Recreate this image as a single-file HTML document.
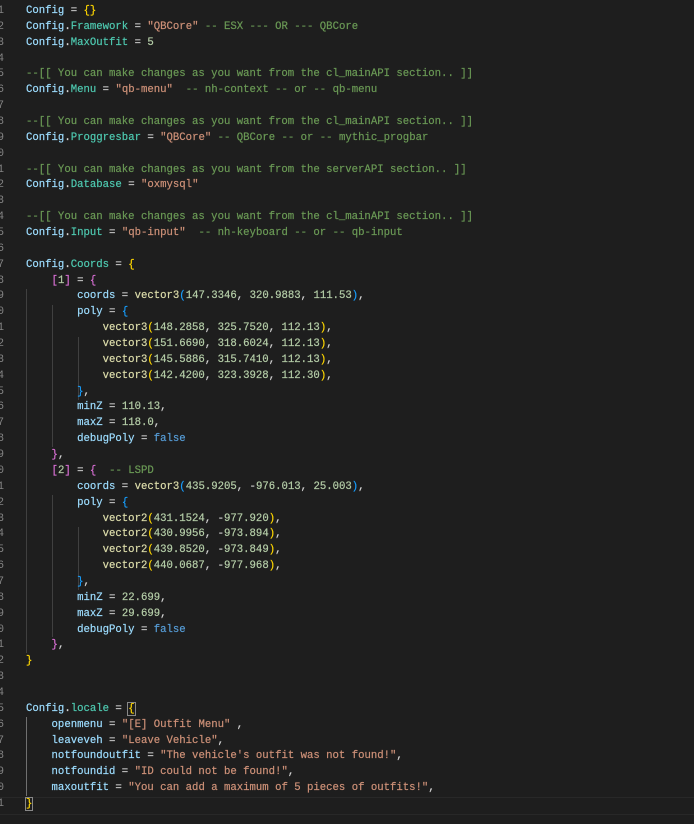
<!DOCTYPE html>
<html><head><meta charset="utf-8"><style>
html,body{margin:0;padding:0;background:#1e1e1e;width:694px;height:824px;overflow:hidden}
pre{margin:0;position:absolute;top:4px;left:26px;font-family:"Liberation Mono",monospace;font-size:10.65px;line-height:15.86px;color:#d4d4d4;white-space:pre;-webkit-text-stroke:0.2px currentColor}
.ln{position:absolute;top:4px;left:-16px;width:20px;text-align:right;font-family:"Liberation Mono",monospace;font-size:10.65px;line-height:15.86px;color:#858585;white-space:pre}
.v{color:#9cdcfe}.p{color:#4ec9b0}.s{color:#ce9178}.c{color:#6a9955}.n{color:#b5cea8}.f{color:#dcdcaa}.k{color:#569cd6}
.b1{color:#ffd700}.b2{color:#da70d6}.b3{color:#179fff}
.g{position:absolute;width:1px;background:#404040}
.hl{position:absolute;left:0;right:0;top:797px;height:16px;border-top:1px solid #282828;border-bottom:1px solid #282828}
.bx{outline:1px solid #888;}
</style></head><body>
<div class="hl"></div>
<div class="g" style="left:26px;top:289px;height:364px"></div>
<div class="g" style="left:52px;top:305px;height:142px"></div>
<div class="g" style="left:52px;top:495px;height:142px"></div>
<div class="g" style="left:78px;top:337px;height:63px"></div>
<div class="g" style="left:78px;top:527px;height:63px"></div>
<div class="g" style="left:26px;top:717px;height:79px;background:#707070"></div>
<div class="ln">1
2
3
4
5
6
7
8
9
0
1
2
3
4
5
6
7
8
9
0
1
2
3
4
5
6
7
8
9
0
1
2
3
4
5
6
7
8
9
0
1
2
3
4
5
6
7
8
9
0
1</div>
<pre><span class="v">Config</span> = <span class="b1">{}</span>
<span class="v">Config</span>.<span class="p">Framework</span> = <span class="s">"QBCore"</span> <span class="c">-- ESX --- OR --- QBCore</span>
<span class="v">Config</span>.<span class="p">MaxOutfit</span> = <span class="n">5</span>

<span class="c">--[[ You can make changes as you want from the cl_mainAPI section.. ]]</span>
<span class="v">Config</span>.<span class="p">Menu</span> = <span class="s">"qb-menu"</span>  <span class="c">-- nh-context -- or -- qb-menu</span>

<span class="c">--[[ You can make changes as you want from the cl_mainAPI section.. ]]</span>
<span class="v">Config</span>.<span class="p">Proggresbar</span> = <span class="s">"QBCore"</span> <span class="c">-- QBCore -- or -- mythic_progbar</span>

<span class="c">--[[ You can make changes as you want from the serverAPI section.. ]]</span>
<span class="v">Config</span>.<span class="p">Database</span> = <span class="s">"oxmysql"</span>

<span class="c">--[[ You can make changes as you want from the cl_mainAPI section.. ]]</span>
<span class="v">Config</span>.<span class="p">Input</span> = <span class="s">"qb-input"</span>  <span class="c">-- nh-keyboard -- or -- qb-input</span>

<span class="v">Config</span>.<span class="p">Coords</span> = <span class="b1">{</span>
    <span class="b2">[</span><span class="n">1</span><span class="b2">]</span> = <span class="b2">{</span>
        <span class="v">coords</span> = <span class="f">vector3</span><span class="b3">(</span><span class="n">147.3346</span>, <span class="n">320.9883</span>, <span class="n">111.53</span><span class="b3">)</span>,
        <span class="v">poly</span> = <span class="b3">{</span>
            <span class="f">vector3</span><span class="b1">(</span><span class="n">148.2858</span>, <span class="n">325.7520</span>, <span class="n">112.13</span><span class="b1">)</span>,
            <span class="f">vector3</span><span class="b1">(</span><span class="n">151.6690</span>, <span class="n">318.6024</span>, <span class="n">112.13</span><span class="b1">)</span>,
            <span class="f">vector3</span><span class="b1">(</span><span class="n">145.5886</span>, <span class="n">315.7410</span>, <span class="n">112.13</span><span class="b1">)</span>,
            <span class="f">vector3</span><span class="b1">(</span><span class="n">142.4200</span>, <span class="n">323.3928</span>, <span class="n">112.30</span><span class="b1">)</span>,
        <span class="b3">}</span>,
        <span class="v">minZ</span> = <span class="n">110.13</span>,
        <span class="v">maxZ</span> = <span class="n">118.0</span>,
        <span class="v">debugPoly</span> = <span class="k">false</span>
    <span class="b2">}</span>,
    <span class="b2">[</span><span class="n">2</span><span class="b2">]</span> = <span class="b2">{</span>  <span class="c">-- LSPD</span>
        <span class="v">coords</span> = <span class="f">vector3</span><span class="b3">(</span><span class="n">435.9205</span>, -<span class="n">976.013</span>, <span class="n">25.003</span><span class="b3">)</span>,
        <span class="v">poly</span> = <span class="b3">{</span>
            <span class="f">vector2</span><span class="b1">(</span><span class="n">431.1524</span>, -<span class="n">977.920</span><span class="b1">)</span>,
            <span class="f">vector2</span><span class="b1">(</span><span class="n">430.9956</span>, -<span class="n">973.894</span><span class="b1">)</span>,
            <span class="f">vector2</span><span class="b1">(</span><span class="n">439.8520</span>, -<span class="n">973.849</span><span class="b1">)</span>,
            <span class="f">vector2</span><span class="b1">(</span><span class="n">440.0687</span>, -<span class="n">977.968</span><span class="b1">)</span>,
        <span class="b3">}</span>,
        <span class="v">minZ</span> = <span class="n">22.699</span>,
        <span class="v">maxZ</span> = <span class="n">29.699</span>,
        <span class="v">debugPoly</span> = <span class="k">false</span>
    <span class="b2">}</span>,
<span class="b1">}</span>


<span class="v">Config</span>.<span class="p">locale</span> = <span class="b1 bx">{</span>
    <span class="v">openmenu</span> = <span class="s">"[E] Outfit Menu"</span> ,
    <span class="v">leaveveh</span> = <span class="s">"Leave Vehicle"</span>,
    <span class="v">notfoundoutfit</span> = <span class="s">"The vehicle's outfit was not found!"</span>,
    <span class="v">notfoundid</span> = <span class="s">"ID could not be found!"</span>,
    <span class="v">maxoutfit</span> = <span class="s">"You can add a maximum of 5 pieces of outfits!"</span>,
<span class="b1 bx">}</span></pre>
</body></html>
